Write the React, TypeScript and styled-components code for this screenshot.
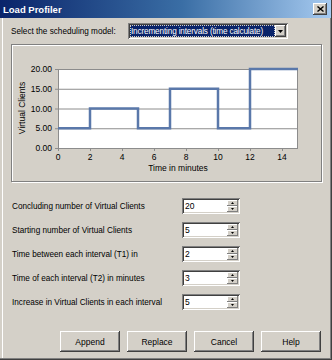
import React from 'react';
import styled, { createGlobalStyle } from 'styled-components';

const GlobalStyle = createGlobalStyle`
  html, body {
    margin: 0;
    padding: 0;
    background: #d4d0c8;
  }
  body {
    font-family: "Liberation Sans", Arial, sans-serif;
  }
`

const Window = styled.div`
  width: 332px;
  height: 360px;
  box-sizing: border-box;
  background: #d4d0c8;
  display: flex;
  flex-direction: column;
  border-right: 1px solid #404040;
  border-bottom: 1px solid #404040;
  box-shadow: inset -1px -1px 0 #808080, inset 2px 0 0 #d4d0c8, inset 3px 0 0 #fff;
  font-size: 8.2px;
  color: #000;
`

const TitleBar = styled.div`
  height: 18px;
  display: flex;
  align-items: center;
  justify-content: space-between;
  padding: 0 4px 0 3px;
  background: linear-gradient(to right, #0a246a 0%, #3a6ea5 55%, #a6caf0 100%);
`

const TitleText = styled.span`
  color: #fff;
  font-weight: bold;
  font-size: 9.5px;
`

const RaisedButton = styled.button`
  box-sizing: border-box;
  padding: 0;
  margin: 0;
  background: #d4d0c8;
  border: none;
  box-shadow: inset -1px -1px 0 #404040, inset 1px 1px 0 #fff, inset -2px -2px 0 #808080, inset 2px 2px 0 #d4d0c8;
  font-family: inherit;
  color: #000;
`

const CloseButton = styled(RaisedButton)`
  width: 14px;
  height: 12px;
  display: flex;
  align-items: center;
  justify-content: center;
`

const Body = styled.div`
  flex: 1;
  display: flex;
  flex-direction: column;
  padding: 5px 10px 0 11px;
`

const ModelRow = styled.div`
  display: flex;
  align-items: center;
  height: 16px;
`

const ModelLabel = styled.span`
  width: 117px;
`

const Sunken = styled.div`
  box-sizing: border-box;
  background: #fff;
  box-shadow: inset 1px 1px 0 #808080, inset -1px -1px 0 #fff, inset 2px 2px 0 #404040, inset -2px -2px 0 #d4d0c8;
  display: flex;
  align-items: center;
  padding: 2px;
`

const Combo = styled(Sunken)`
  width: 160px;
  height: 16px;
`

const ComboText = styled.span`
  flex: 1;
  height: 100%;
  display: flex;
  align-items: center;
  background: #0a246a;
  color: #fff;
  outline: 1px dotted #d4d0c8;
  outline-offset: -1px;
  padding-left: 1px;
  white-space: nowrap;
  overflow: hidden;
  letter-spacing: -0.15px;
`

const ComboArrow = styled(RaisedButton)`
  width: 11px;
  height: 100%;
  display: flex;
  align-items: center;
  justify-content: center;
`

const ChartBox = styled.div`
  margin-top: 5px;
  width: 311px;
  height: 138px;
  box-sizing: border-box;
  border: 1px solid #808080;
  box-shadow: 1px 1px 0 #fff, inset 1px 1px 0 #fff;
`

const Form = styled.div`
  margin-top: 16px;
  display: grid;
  grid-template-columns: 170px 58px;
  row-gap: 8px;
  align-items: center;
  padding-left: 1px;
`

const Spin = styled(Sunken)`
  height: 16px;
  padding: 2px 2px 2px 3px;
`

const SpinValue = styled.span`
  flex: 1;
  font-size: 8.5px;
`

const SpinButtons = styled.div`
  width: 11px;
  height: 100%;
  display: flex;
  flex-direction: column;
`

const SpinHalf = styled(RaisedButton)`
  flex: 1;
  display: flex;
  align-items: center;
  justify-content: center;
  box-shadow: inset -1px -1px 0 #808080, inset 1px 1px 0 #fff;
`

const ButtonRow = styled.div`
  margin-top: auto;
  margin-bottom: 7px;
  display: flex;
  justify-content: flex-end;
  gap: 7px;
`

const DialogButton = styled(RaisedButton)`
  width: 60px;
  height: 21px;
  font-size: 8.5px;
`

const Arrow = ({ up, w = 5, h = 3 }: { up?: boolean; w?: number; h?: number }) => (
  <svg width={w} height={h} viewBox={`0 0 ${w} ${h}`}>
    <polygon points={up ? `0,${h} ${w},${h} ${w / 2},0` : `0,0 ${w},0 ${w / 2},${h}`} fill="#000" />
  </svg>
)

// step profile: [start, end, clients]
const steps: [number, number, number][] = [
  [0, 2, 5], [2, 5, 10], [5, 7, 5], [7, 10, 15], [10, 12, 5], [12, 15, 20],
]

const Chart = () => {
  const left = 46, right = 286, top = 24, bottom = 103;
  const sx = (t: number) => left + (t / 15) * (right - left);
  const sy = (v: number) => bottom - (v / 20) * (bottom - top);

  let d = '';
  steps.forEach(([a, b, v], i) => {
    d += (i === 0 ? 'M' : 'L') + sx(a) + ',' + sy(v) + ' L' + sx(b) + ',' + sy(v) + ' ';
  });

  return (
    <svg width="309" height="136" viewBox="0 0 309 136" style={{ display: 'block' }}
      fontFamily='"Liberation Sans", Arial, sans-serif' fontSize="8.5">
      <rect x={left} y={top} width={right - left} height={bottom - top} fill="#fff" />
      {[0, 5, 10, 15, 20].map(v => (
        <g key={v}>
          <line x1={left - 3} x2={right} y1={sy(v) + 0.5} y2={sy(v) + 0.5} stroke="#8c8c8c" />
          <text x={left - 6} y={sy(v) + 3} textAnchor="end">{v.toFixed(2)}</text>
        </g>
      ))}
      <line x1={left + 0.5} x2={left + 0.5} y1={top} y2={bottom} stroke="#8c8c8c" />
      <line x1={right - 0.5} x2={right - 0.5} y1={top} y2={bottom} stroke="#8c8c8c" />
      {[0, 2, 4, 6, 8, 10, 12, 14].map(t => (
        <g key={t}>
          <line x1={sx(t) + 0.5} x2={sx(t) + 0.5} y1={bottom} y2={bottom + 3} stroke="#8c8c8c" />
          <text x={sx(t)} y={bottom + 12} textAnchor="middle">{t}</text>
        </g>
      ))}
      <path d={d} fill="none" stroke="#5a78aa" strokeWidth="2.5" strokeLinejoin="miter" />
      <text x="166" y="126" textAnchor="middle">Time in minutes</text>
      <text x="0" y="0" textAnchor="middle" transform="translate(13 63) rotate(-90)">Virtual Clients</text>
    </svg>
  )
}

const fields = [
  ['Concluding number of Virtual Clients', '20'],
  ['Starting number of Virtual Clients', '5'],
  ['Time between each interval (T1) in', '2'],
  ['Time of each interval (T2) in minutes', '3'],
  ['Increase in Virtual Clients in each interval', '5'],
]

const App: React.FC = () => {
  return (
    <>
      <GlobalStyle />
      <Window>
        <TitleBar>
          <TitleText>Load Profiler</TitleText>
          <CloseButton>
            <svg width="7" height="6" viewBox="0 0 7 6">
              <path d="M0.5,0.5 L6.5,5.5 M6.5,0.5 L0.5,5.5" stroke="#000" strokeWidth="1.4" />
            </svg>
          </CloseButton>
        </TitleBar>
        <Body>
          <ModelRow>
            <ModelLabel>Select the scheduling model:</ModelLabel>
            <Combo>
              <ComboText>Incrementing intervals (time calculate)</ComboText>
              <ComboArrow><Arrow /></ComboArrow>
            </Combo>
          </ModelRow>
          <ChartBox>
            <Chart />
          </ChartBox>
          <Form>
            {fields.map(([label, value]) => (
              <React.Fragment key={label}>
                <span>{label}</span>
                <Spin>
                  <SpinValue>{value}</SpinValue>
                  <SpinButtons>
                    <SpinHalf><Arrow up w={3} h={2} /></SpinHalf>
                    <SpinHalf><Arrow w={3} h={2} /></SpinHalf>
                  </SpinButtons>
                </Spin>
              </React.Fragment>
            ))}
          </Form>
          <ButtonRow>
            <DialogButton>Append</DialogButton>
            <DialogButton>Replace</DialogButton>
            <DialogButton>Cancel</DialogButton>
            <DialogButton>Help</DialogButton>
          </ButtonRow>
        </Body>
      </Window>
    </>
  )
}

export default App;
